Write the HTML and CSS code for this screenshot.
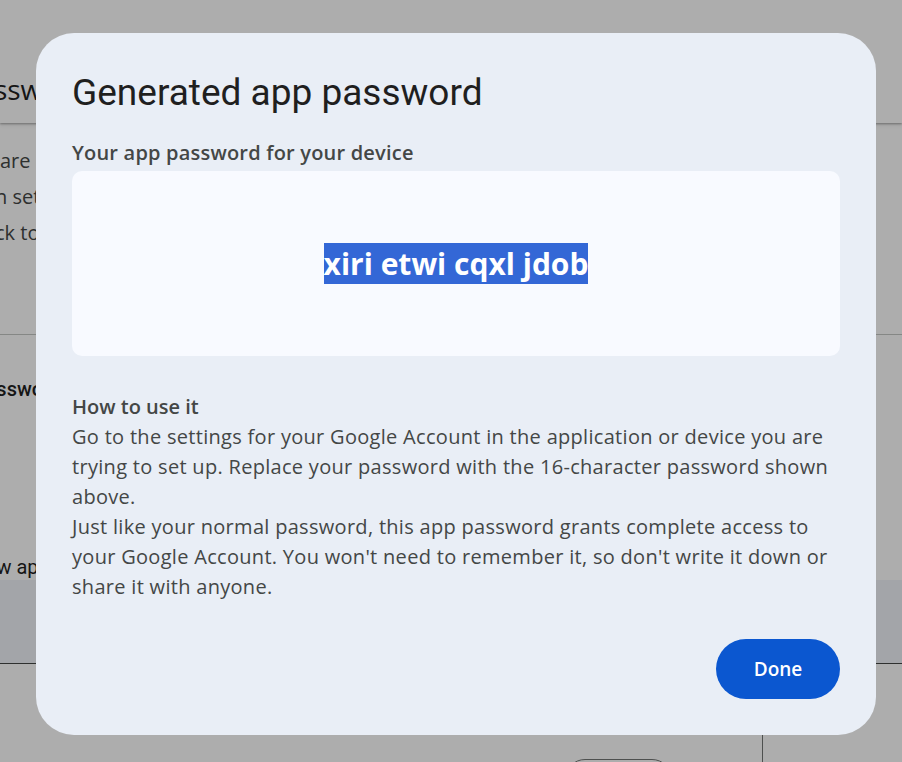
FILE: index.html
```html
<!DOCTYPE html>
<html lang="en">
<head>
<meta charset="utf-8">
<title>Generated app password</title>
<link rel="stylesheet" href="styles.css">
</head>
<body>
<div class="page">
  <header class="page-header">
    <h1 class="page-title">App passwords</h1>
  </header>
  <main class="page-main">
    <div class="page-intro">
      <div class="intro-line">are used</div>
      <div class="intro-line cut">n settings</div>
      <div class="intro-line cut">ck to</div>
    </div>
    <div class="page-divider"></div>
    <h2 class="page-sub">Your app passwords</h2>
    <p class="page-note">To create a new app</p>
    <div class="page-field"></div>
    <div class="page-footer">
      <div class="footer-left">
        <button class="page-btn" type="button">Create</button>
      </div>
      <div class="footer-right"></div>
    </div>
  </main>
</div>

<div class="overlay">
  <div class="dialog" role="dialog" aria-labelledby="dlg-title">
    <h2 class="dialog-title" id="dlg-title">Generated app password</h2>
    <div class="dialog-label">Your app password for your device</div>
    <div class="pw-box">
      <span class="pw-text">xiri etwi cqxl jdob</span>
    </div>
    <div class="howto">
      <div class="howto-title">How to use it</div>
      <p class="howto-text">Go to the settings for your Google Account in the application or device you are trying to set up. Replace your password with the 16-character password shown above.</p>
      <p class="howto-text">Just like your normal password, this app password grants complete access to your Google Account. You won't need to remember it, so don't write it down or share it with anyone.</p>
    </div>
    <div class="actions">
      <button class="btn-done" type="button">Done</button>
    </div>
  </div>
</div>
</body>
</html>
```
FILE: styles.css
```css
* { box-sizing: border-box; }

html, body {
  margin: 0;
  padding: 0;
  height: 100%;
  overflow: hidden;
}

body {
  background: #ffffff;
  font-family: Roboto, "Liberation Sans", Arial, sans-serif;
  color: #1f1f1f;
}

.page {
  overflow: hidden;
}

.page-header {
  height: 123px;
  display: flex;
  align-items: center;
  padding-top: 55px;
  box-shadow: 0 1px 2px rgba(0,0,0,0.3), 0 2px 4px rgba(0,0,0,0.1);
  overflow: hidden;
}

.page-title {
  margin: 0 0 0 -98px;
  font-family: "Open Sans", Roboto, sans-serif;
  font-weight: 400;
  font-size: 28px;
  color: #1f1f1f;
  white-space: nowrap;
}

.page-main {
  overflow: hidden;
}

.page-intro {
  padding-top: 20px;
  font-family: "Open Sans", Roboto, sans-serif;
  font-size: 20px;
  line-height: 36px;
  color: #444746;
}

.intro-line {
  white-space: nowrap;
  margin-left: 0;
}

.intro-line.cut {
  margin-left: -5px;
}

.page-divider {
  margin-top: 83px;
  height: 1px;
  background: #c4c7c5;
}

.page-sub {
  margin: 42px 0 0 -110px;
  font-size: 20px;
  font-weight: 500;
  line-height: 24px;
  color: #1f1f1f;
  white-space: nowrap;
}

.page-note {
  margin: 154px 0 0 -129px;
  font-size: 20px;
  line-height: 24px;
  color: #1f1f1f;
  white-space: nowrap;
}

.page-field {
  margin-top: 1px;
  height: 84px;
  background: #f0f4f9;
  border-bottom: 1px solid #444746;
}

.page-footer {
  display: flex;
  height: 120px;
}

.footer-left {
  width: 762px;
  padding: 95px 0 0 565px;
}

.page-btn {
  width: 107px;
  height: 40px;
  border: 1px solid #747775;
  border-radius: 20px;
  background: transparent;
  color: #0b57d0;
  font-size: 14px;
}

.footer-right {
  flex: 1;
  border-left: 1px solid #747775;
}

.overlay {
  position: fixed;
  inset: 0;
  background: rgba(0, 0, 0, 0.32);
  display: flex;
  align-items: flex-start;
  padding: 33px 0 0 36px;
}

.dialog {
  width: 840px;
  height: 702px;
  background: #e9eef6;
  border-radius: 38px;
  padding: 36px 36px 36px;
  display: flex;
  flex-direction: column;
}

.dialog-title {
  margin: 0;
  font-family: Roboto, sans-serif;
  font-weight: 400;
  font-size: 37px;
  line-height: 48px;
  color: #1f1f1f;
}

.dialog-label {
  margin-top: 24px;
  font-family: "Open Sans", Roboto, sans-serif;
  font-size: 20px;
  font-weight: 600;
  line-height: 24px;
  letter-spacing: 0.2px;
  color: #444746;
}

.pw-box {
  margin-top: 6px;
  height: 185px;
  background: #f8faff;
  border-radius: 10px;
  display: flex;
  align-items: center;
  justify-content: center;
}

.pw-text {
  font-family: "Open Sans", Roboto, sans-serif;
  font-weight: 700;
  font-size: 30px;
  line-height: 41px;
  color: #ffffff;
  background: #3367d6;
}

.howto {
  margin-top: 39px;
  color: #444746;
  font-family: "Open Sans", Roboto, sans-serif;
}

.howto-title {
  font-size: 20px;
  font-weight: 600;
  line-height: 24px;
  margin-bottom: 3px;
}

.howto-text {
  margin: 0;
  font-size: 20px;
  line-height: 30px;
  letter-spacing: 0.3px;
}

.actions {
  margin-top: auto;
  display: flex;
  justify-content: flex-end;
}

.btn-done {
  width: 124px;
  height: 60px;
  border: 0;
  border-radius: 30px;
  background: #0b57d0;
  color: #ffffff;
  font-family: "Open Sans", Roboto, sans-serif;
  font-size: 19px;
  font-weight: 600;
  cursor: pointer;
}
```
